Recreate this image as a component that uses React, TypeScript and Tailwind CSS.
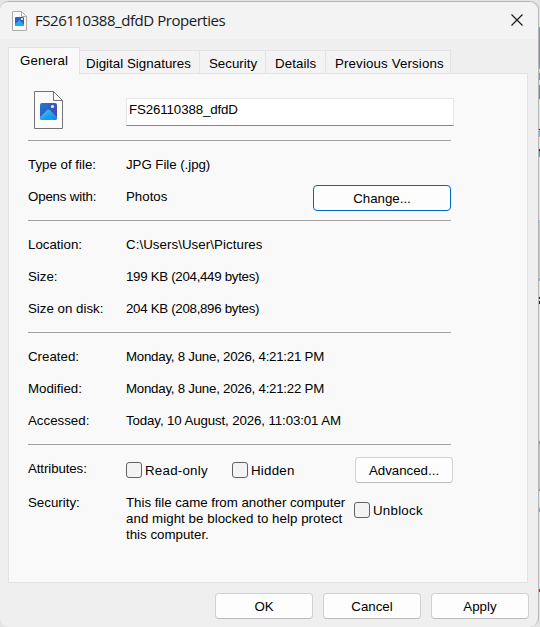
import type { ReactNode } from 'react'

const tabs = [
  { label: 'Digital Signatures', className: 'w-[120px] pl-[6px] tracking-[0.04px]' },
  { label: 'Security', className: 'w-[66px] pl-[9px]' },
  { label: 'Details', className: 'w-[60px] pl-[9px] tracking-[0.1px]' },
  { label: 'Previous Versions', className: 'w-[125px] pl-[9px] tracking-[0.14px]' },
]

// strip of other windows that shows past the right edge of the dialog
const strip = [
  { y: 27, h: 42, color: '#8593a6' },
  { y: 69, h: 4, color: '#dfe3e8' },
  { y: 73, h: 7, color: '#8593a6' },
  { y: 80, h: 5, color: '#dfe3e8' },
  { y: 85, h: 14, color: '#75879a' },
  { y: 129, h: 1, color: '#111111' },
  { y: 130, h: 7, color: '#7fb6de' },
  { y: 149, h: 2, color: '#222222' },
  { y: 151, h: 6, color: '#5b93d6' },
  { y: 220, h: 3, color: '#a5c9cf' },
  { y: 223, h: 54, color: '#c6c6c6' },
  { y: 278, h: 3, color: '#83b2c0' },
  { y: 297, h: 2, color: '#16222e' },
  { y: 301, h: 3, color: '#222222' },
  { y: 441, h: 3, color: '#929292' },
  { y: 444, h: 46, color: '#c4c4c4' },
  { y: 489, h: 2, color: '#929292' },
  { y: 508, h: 4, color: '#73a9cf' },
  { y: 589, h: 3, color: '#b3262b' },
]

function FileIcon() {
  return (
    <svg width="29" height="38" viewBox="0 0 29 38" fill="none">
      <defs>
        <linearGradient id="photo" x1="0" y1="0" x2="1" y2="1">
          <stop offset="0" stopColor="#1b7bd0" />
          <stop offset="0.55" stopColor="#3a55bd" />
          <stop offset="1" stopColor="#5a35a8" />
        </linearGradient>
        <linearGradient id="hill" x1="0" y1="0" x2="1" y2="1">
          <stop offset="0" stopColor="#3ad0f5" />
          <stop offset="1" stopColor="#1276dc" />
        </linearGradient>
        <clipPath id="photoClip">
          <rect x="6" y="12" width="17" height="17" rx="2" />
        </clipPath>
      </defs>
      <path d="M.5 .5H19.5L28.5 9.5V37.5H.5Z" fill="#fbfbfb" stroke="#747474" />
      <path d="M19.5 .5V9.5H28.5" stroke="#747474" />
      <g clipPath="url(#photoClip)">
        <rect x="6" y="12" width="17" height="17" fill="url(#photo)" />
        <path d="M4 28L13 19.2Q14.5 17.8 16 19.2L25 28V30H4Z" fill="url(#hill)" />
        <path d="M9 29L14.5 23.5L20 29Z" fill="#159aef" />
        <circle cx="18.5" cy="15.5" r="1.6" fill="#e9f3fd" />
      </g>
    </svg>
  )
}

function SmallFileIcon() {
  return (
    <svg width="15" height="20" viewBox="0 0 15 20" fill="none">
      <path d="M.5 .5H9.5L14.5 5.5V19.5H.5Z" fill="#fafafa" stroke="#ababab" />
      <path d="M9.5 .5V5.5H14.5" stroke="#ababab" />
      <rect x="3" y="6" width="9" height="9" rx="1" fill="#2c62c4" />
      <path d="M3 13L7.5 9L12 13.5V14Q12 15 11 15H4Q3 15 3 14Z" fill="#25a9ee" />
      <rect x="9" y="7" width="2" height="2" fill="#dcebfb" />
    </svg>
  )
}

function Row({ label, className = '', children }: { label: string; className?: string; children: ReactNode }) {
  return (
    <div className="flex h-8 items-center">
      <span className="w-[98px] shrink-0">{label}</span>
      <span className={className}>{children}</span>
    </div>
  )
}

function Section({ children }: { children: ReactNode }) {
  return <div className="w-[423px] border-t border-[#a0a0a0] pt-2 pb-[7px]">{children}</div>
}

function Checkbox({ label }: { label: string }) {
  return (
    <label className="flex h-4 items-center gap-[3px]">
      <span className="size-4 rounded-[3px] border border-[#626262] bg-[#f3f3f3]" />
      <span className="pt-[2px] tracking-[0.25px]">{label}</span>
    </label>
  )
}

function Button({ children }: { children: ReactNode }) {
  return (
    <button className="h-[26px] w-[98px] rounded-[4px] border border-[#d0d0d0] border-b-[#bcbcbc] bg-[#fdfdfd] pt-[2px]">
      {children}
    </button>
  )
}

export default function App() {
  return (
    <div className="flex h-[627px] w-[540px] overflow-hidden bg-[#e4e4e4] pt-px font-['Liberation_Sans',Arial,sans-serif] text-[13.3px] leading-4 text-black">
      <div className="flex h-[626px] w-[539px] shrink-0 flex-col rounded-[9px] border-t border-r border-[#b5b5b5] bg-[#efefef]">
        {/* Title bar */}
        <div className="flex h-[37px] shrink-0 items-center rounded-t-[9px] bg-[#f3f3f3] pl-3">
          <SmallFileIcon />
          <span className="mb-[2px] ml-2 font-['Open_Sans',sans-serif] text-[15px] tracking-[-0.45px] whitespace-nowrap text-[#1a1a1a]">
            FS26110388_dfdD Properties
          </span>
          <svg className="mr-[15px] mb-px ml-auto" width="12" height="12" viewBox="0 0 12 12" fill="none">
            <path d="M.5 .5L11.5 11.5M11.5 .5L.5 11.5" stroke="#1a1a1a" strokeWidth="1.2" />
          </svg>
        </div>

        {/* Tabs */}
        <div className="mt-2 ml-2 flex h-[26px] shrink-0 items-end">
          <div className="relative z-10 -mb-px h-[27px] w-[72px] border border-b-0 border-[#e3e3e3] bg-[#f9f9f9] pt-[5px] pl-[11px] tracking-[0.1px]">
            General
          </div>
          {tabs.map((tab) => (
            <div
              key={tab.label}
              className={`h-[23px] border-t border-r border-[#e3e3e3] bg-[#f3f3f3] pt-[5px] whitespace-nowrap ${tab.className}`}
            >
              {tab.label}
            </div>
          ))}
        </div>

        {/* Page */}
        <div className="ml-2 h-[510px] w-[520px] shrink-0 border border-[#e3e3e3] bg-[#f9f9f9] pl-[19px]">
          <div className="flex h-[66px] items-start pt-[17px]">
            <div className="ml-[6px] w-[92px]">
              <FileIcon />
            </div>
            <input
              className="mt-[7px] h-7 w-[328px] border border-[#e6e6e6] border-b-[#868686] bg-white px-[2px] pb-[5px] tracking-[-0.12px]"
              defaultValue="FS26110388_dfdD"
            />
          </div>

          <Section>
            <Row label="Type of file:" className="tracking-[-0.05px]">JPG File (.jpg)</Row>
            <div className="flex h-8 items-center">
              <span className="w-[98px] shrink-0 tracking-[-0.18px]">Opens with:</span>
              <span>Photos</span>
              <button className="mt-[2px] ml-auto h-[26px] w-[138px] rounded-[4px] border border-[#0067c0] bg-[#fdfdfd] pt-[2px]">
                Change...
              </button>
            </div>
          </Section>
          <Section>
            <Row label="Location:" className="tracking-[0.06px]">C:\Users\User\Pictures</Row>
            <Row label="Size:" className="tracking-[-0.3px]">199 KB (204,449 bytes)</Row>
            <Row label="Size on disk:" className="tracking-[-0.3px]">204 KB (208,896 bytes)</Row>
          </Section>
          <Section>
            <Row label="Created:" className="tracking-[-0.25px]">Monday, 8 June, 2026, 4:21:21 PM</Row>
            <Row label="Modified:" className="tracking-[-0.25px]">Monday, 8 June, 2026, 4:21:22 PM</Row>
            <Row label="Accessed:" className="tracking-[-0.12px]">Today, 10 August, 2026, 11:03:01 AM</Row>
          </Section>

          <div className="w-[423px] border-t border-[#a0a0a0] pt-3">
            <div className="flex w-[425px] items-center">
              <span className="mb-[2px] w-[98px] tracking-[-0.1px]">Attributes:</span>
              <div className="w-[106px]">
                <Checkbox label="Read-only" />
              </div>
              <Checkbox label="Hidden" />
              <div className="ml-auto">
                <Button>Advanced...</Button>
              </div>
            </div>
            <div className="mt-3 flex">
              <span className="w-[98px]">Security:</span>
              <p className="w-[228px] whitespace-nowrap">
                <span className="tracking-[-0.03px]">This file came from another computer</span>
                <br />
                <span className="tracking-[0.05px]">and might be blocked to help protect</span>
                <br />
                this computer.
              </p>
              <div className="mt-[7px]">
                <Checkbox label="Unblock" />
              </div>
            </div>
          </div>
        </div>

        {/* Footer */}
        <div className="mt-[10px] mr-[9px] flex justify-end gap-[10px]">
          <Button>OK</Button>
          <Button>Cancel</Button>
          <Button>Apply</Button>
        </div>
      </div>

      <svg className="-mt-px shrink-0" width="1" height="627">
        {strip.map((s) => (
          <rect key={s.y} x="0" y={s.y} width="1" height={s.h} fill={s.color} />
        ))}
      </svg>
    </div>
  )
}
